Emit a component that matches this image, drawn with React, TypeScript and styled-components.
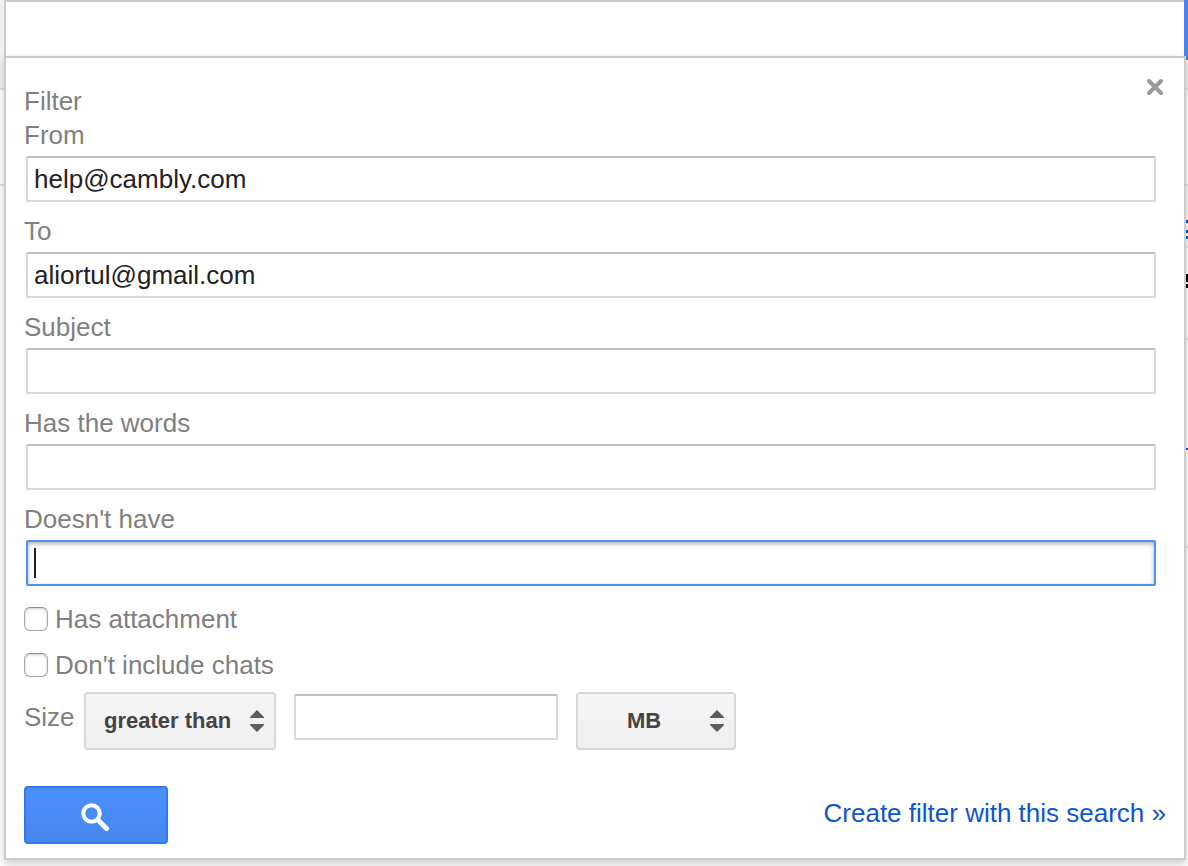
import React from "react";
import styled, { createGlobalStyle } from "styled-components";

const GlobalStyle = createGlobalStyle`
  *, *::before, *::after { box-sizing: border-box; }
  body {
    margin: 0;
    background: #fff;
    color: #222;
    font-family: "Liberation Sans", Arial, Helvetica, sans-serif;
    font-size: 26px;
    line-height: 34px;
  }
  input, button, select { font: inherit; margin: 0; outline: none; }
`;

const Page = styled.div`
  position: relative;
  min-height: 100vh;
  overflow: hidden;
`;

/* The mailbox behind the popup, of which only the edges show. */
const Mailbox = styled.div`
  position: absolute;
  inset: 0;
  display: flex;
  flex-direction: column;
  align-items: stretch;
`;

const Band = styled.div<{ $height: number; $fill?: string; $line?: string; $inset?: boolean }>`
  flex: none;
  height: ${(p) => p.$height}px;
  margin-left: ${(p) => (p.$inset ? 24 : 0)}px;
  background: ${(p) => p.$fill || "#fff"};
  border-bottom: 2px solid ${(p) => p.$line || "#e5e5e5"};
  display: flex;
  flex-direction: column;
  align-items: flex-end;
`;

const Edge = styled.i<{ $top: number; $height: number; $color: string }>`
  flex: none;
  width: 2px;
  height: ${(p) => p.$height}px;
  margin-top: ${(p) => p.$top}px;
  background: ${(p) => p.$color};
`;

const SearchForm = styled.form`
  position: relative;
  padding: 0 2px 6px 4px;
`;

const SearchBar = styled.div`
  display: flex;
  align-items: flex-start;
  margin-right: -2px;
`;

const SearchInput = styled.input`
  flex: 1;
  min-width: 0;
  height: 58px;
  padding: 0 12px;
  border: 2px solid #ccc;
  border-right: 0;
  border-radius: 0;
  background: #fff;
`;

const SearchEdgeButton = styled.button`
  flex: none;
  width: 4px;
  height: 60px;
  padding: 0;
  border: 0;
  background: #4787ed;
`;

const Panel = styled.section`
  position: relative;
  display: flex;
  flex-direction: column;
  margin-top: -4px;
  padding: 16px 18px 14px;
  border: 2px solid #ccc;
  background: #fff;
  box-shadow: 0 4px 8px rgba(0, 0, 0, 0.2);
`;

const PanelHeader = styled.header`
  display: flex;
  justify-content: space-between;
  align-items: flex-start;
`;

const Title = styled.h2`
  margin: 0;
  padding-top: 10px;
  font: inherit;
  color: #808080;
`;

const CloseButton = styled.button`
  display: flex;
  align-items: center;
  justify-content: center;
  width: 22px;
  height: 26px;
  padding: 0;
  border: 0;
  background: none;
`;

const Field = styled.div`
  display: flex;
  flex-direction: column;
  gap: 4px;
  margin-bottom: 12px;
`;

const Label = styled.label`
  color: #808080;
`;

const TextInput = styled.input`
  height: 46px;
  min-width: 0;
  padding: 0 6px;
  border: 2px solid #d9d9d9;
  border-top-color: #c0c0c0;
  border-radius: 2px;
  background: #fff;
  color: #222;
`;

const FieldInput = styled(TextInput)<{ $active?: boolean }>`
  margin: 0 10px 0 2px;
  ${(p) =>
    p.$active &&
    `
    border-color: #4d90fe;
    box-shadow: inset 0 2px 4px rgba(0, 0, 0, 0.3);
    background: linear-gradient(#222, #222) 6px center / 2px 30px no-repeat #fff;
  `}
`;

const CheckRow = styled.label`
  display: flex;
  align-items: center;
  gap: 7px;
  margin-top: 4px;
  margin-bottom: 8px;
  color: #808080;
`;

const CheckBox = styled.input`
  appearance: none;
  width: 24px;
  height: 24px;
  border: 1px solid #aaa;
  border-top-color: #8e8e8e;
  border-radius: 6px;
  background: #fff;
  box-shadow: inset 0 1px 3px rgba(0, 0, 0, 0.2);
`;

const SizeRow = styled.div`
  display: flex;
  align-items: flex-start;
  gap: 18px;
  margin-top: 2px;
`;

const SizeGroup = styled.div`
  display: flex;
  align-items: flex-start;
`;

const SizeLabel = styled(Label)`
  width: 60px;
  padding-top: 8px;
`;

const SizeInput = styled(TextInput)`
  width: 264px;
  margin-top: 2px;
`;

const SelectBox = styled.div<{ $width: number }>`
  display: grid;
  width: ${(p) => p.$width}px;
  height: 58px;

  > * { grid-area: 1 / 1; }
  > svg { align-self: center; justify-self: end; margin-right: 12px; pointer-events: none; }
`;

const Select = styled.select<{ $indent: number }>`
  appearance: none;
  padding: 0 0 0 ${(p) => p.$indent}px;
  border: 2px solid #d8d8d8;
  border-radius: 4px;
  background: linear-gradient(#f5f5f5, #f0f0f0);
  color: #444;
  font-size: 22px;
  font-weight: bold;
`;

const Footer = styled.footer`
  display: flex;
  justify-content: space-between;
  align-items: flex-start;
  margin-top: 36px;
`;

const SubmitButton = styled.button`
  display: flex;
  align-items: center;
  justify-content: center;
  width: 144px;
  height: 58px;
  padding: 0;
  border: 2px solid #3079ed;
  border-radius: 4px;
  background: linear-gradient(#4d90fe, #4787ed);
`;

const FilterLink = styled.a`
  padding-top: 10px;
  color: #15c;
  text-decoration: none;
`;

const Arrows = () => (
  <svg width="14" height="22" viewBox="0 0 14 22" aria-hidden="true">
    <path d="M7 0 L14 7 V8 H0 V7 Z M0 14 H14 V15 L7 22 L0 15 Z" fill="#5c5c5c" />
  </svg>
);

const fields = [
  { id: "from", label: "From", value: "help@cambly.com" },
  { id: "to", label: "To", value: "aliortul@gmail.com" },
  { id: "subject", label: "Subject", value: "" },
  { id: "has", label: "Has the words", value: "" },
  { id: "hasnot", label: "Doesn't have", value: "", active: true },
];

export default function App() {
  return (
    <Page>
      <GlobalStyle />
      <Mailbox aria-hidden="true">
        <Band $height={90} $fill="#f1f1f1" $line="#dedede" />
        <Band $height={96} $line="#dcdcdc" />
        <Band $height={62} $fill="#fafafa" $inset>
          <Edge $top={34} $height={3} $color="#15c" />
          <Edge $top={7} $height={3} $color="#15c" />
          <Edge $top={3} $height={3} $color="#15c" />
        </Band>
        <Band $height={92} $inset>
          <Edge $top={26} $height={8} $color="#000" />
          <Edge $top={2} $height={4} $color="#000" />
        </Band>
        <Band $height={208} $inset>
          <Edge $top={108} $height={2} $color="#15c" />
        </Band>
      </Mailbox>

      <SearchForm onSubmit={(e) => e.preventDefault()}>
        <SearchBar>
          <SearchInput type="text" aria-label="Search mail" />
          <SearchEdgeButton type="submit" aria-label="Search mail" />
        </SearchBar>

        <Panel>
          <PanelHeader>
            <Title>Filter</Title>
            <CloseButton type="button" aria-label="Close">
              <svg width="18" height="18" viewBox="0 0 18 18">
                <path d="M3 3 L15 15 M15 3 L3 15" stroke="#999" strokeWidth="4" strokeLinecap="round" fill="none" />
              </svg>
            </CloseButton>
          </PanelHeader>

          {fields.map((f) => (
            <Field key={f.id}>
              <Label htmlFor={f.id}>{f.label}</Label>
              <FieldInput id={f.id} type="text" defaultValue={f.value} $active={f.active} />
            </Field>
          ))}

          <CheckRow>
            <CheckBox type="checkbox" />
            Has attachment
          </CheckRow>
          <CheckRow>
            <CheckBox type="checkbox" />
            Don't include chats
          </CheckRow>

          <SizeRow>
            <SizeGroup>
              <SizeLabel htmlFor="size-op">Size</SizeLabel>
              <SelectBox $width={192}>
                <Select id="size-op" $indent={18} defaultValue="gt">
                  <option value="gt">greater than</option>
                  <option value="lt">less than</option>
                </Select>
                <Arrows />
              </SelectBox>
            </SizeGroup>
            <SizeInput type="text" aria-label="Size value" />
            <SelectBox $width={160}>
              <Select $indent={49} aria-label="Size unit" defaultValue="mb">
                <option value="mb">MB</option>
                <option value="kb">KB</option>
              </Select>
              <Arrows />
            </SelectBox>
          </SizeRow>

          <Footer>
            <SubmitButton type="submit" aria-label="Search">
              <svg width="32" height="32" viewBox="0 0 32 32">
                <circle cx="11.5" cy="14.5" r="8.2" stroke="#fff" strokeWidth="4" fill="none" />
                <path d="M18 21 L26.5 29.5" stroke="#fff" strokeWidth="5" strokeLinecap="round" fill="none" />
              </svg>
            </SubmitButton>
            <FilterLink href="#create-filter">Create filter with this search »</FilterLink>
          </Footer>
        </Panel>
      </SearchForm>
    </Page>
  );
}
